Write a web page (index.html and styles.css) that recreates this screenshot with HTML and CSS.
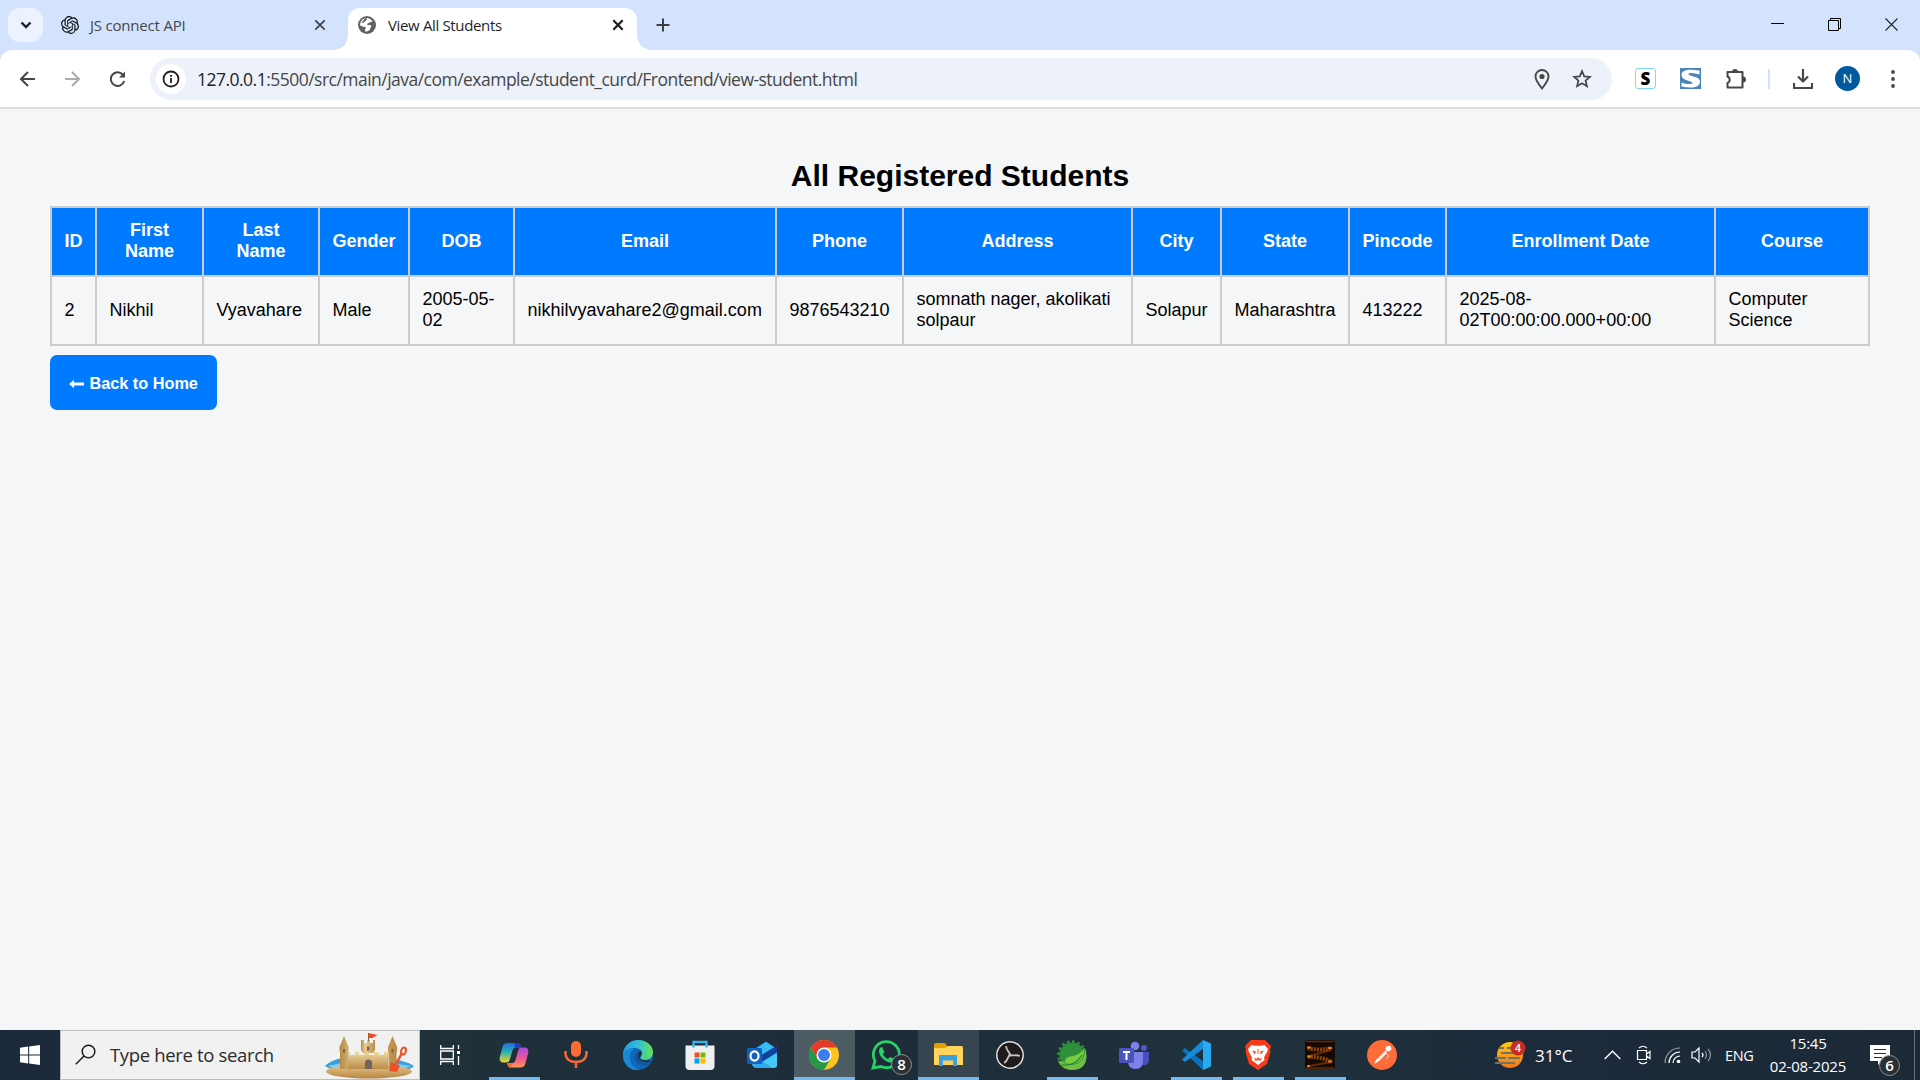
FILE: index.html
```html
<!DOCTYPE html>
<html lang="en">
<head>
<meta charset="utf-8">
<title>View All Students</title>
<link rel="stylesheet" href="styles.css">
</head>
<body>
<div class="screen">
  <header class="tabbar">
    <div class="tab-search"><svg width="35" height="34" viewBox="0 0 35 34"><path d="M13.5 14.5l4.5 4.5 4.5-4.5" fill="none" stroke="#1f1f1f" stroke-width="2.4"/></svg></div>
    <div class="tab">
      <svg class="favicon" width="18" height="18" viewBox="0 0 24 24"><path fill="#111" d="M22.28 9.82a5.98 5.98 0 0 0-.52-4.91 6.05 6.05 0 0 0-6.51-2.9A6.07 6.07 0 0 0 4.98 4.18a5.98 5.98 0 0 0-4 2.9 6.05 6.05 0 0 0 .74 7.1 5.98 5.98 0 0 0 .51 4.91 6.05 6.05 0 0 0 6.52 2.9A5.98 5.98 0 0 0 13.26 24a6.06 6.06 0 0 0 5.77-4.21 5.99 5.99 0 0 0 4-2.9 6.06 6.06 0 0 0-.75-7.07zm-9.02 12.61a4.48 4.48 0 0 1-2.88-1.04l.14-.08 4.78-2.76a.8.8 0 0 0 .39-.68v-6.74l2.02 1.17a.07.07 0 0 1 .04.05v5.58a4.5 4.5 0 0 1-4.49 4.5zM3.6 18.3a4.47 4.47 0 0 1-.53-3.01l.14.08 4.78 2.76a.77.77 0 0 0 .78 0l5.84-3.37v2.33a.08.08 0 0 1-.03.06L9.74 19.95a4.5 4.5 0 0 1-6.14-1.65zM2.34 7.9a4.49 4.49 0 0 1 2.37-1.98v5.69a.77.77 0 0 0 .39.67l5.81 3.36-2.02 1.17a.08.08 0 0 1-.07 0l-4.83-2.79A4.5 4.5 0 0 1 2.34 7.87zm16.6 3.85l-5.84-3.38L15.12 7.2a.08.08 0 0 1 .07 0l4.83 2.79a4.49 4.49 0 0 1-.68 8.1v-5.67a.79.79 0 0 0-.4-.67zm2.01-3.02l-.14-.09-4.77-2.78a.78.78 0 0 0-.79 0L9.41 9.23V6.9a.07.07 0 0 1 .03-.06l4.83-2.79a4.5 4.5 0 0 1 6.68 4.66zM8.31 12.86l-2.02-1.16a.08.08 0 0 1-.04-.06V6.07a4.5 4.5 0 0 1 7.38-3.45l-.14.08L8.7 5.46a.8.8 0 0 0-.39.68zm1.1-2.36l2.6-1.5 2.6 1.5v3l-2.6 1.5-2.6-1.5z"/></svg>
      <span class="tab-title title-a">JS connect API</span>
      <svg class="tab-close" width="12" height="12" viewBox="0 0 12 12"><path d="M1.3 1.3l9.4 9.4M10.7 1.3l-9.4 9.4" stroke="#45474a" stroke-width="1.9"/></svg>
    </div>
    <div class="tab tab-active">
      <svg class="favicon" width="18" height="18" viewBox="0 0 18 18"><circle cx="9" cy="9" r="9" fill="#5f6368"/><path fill="#fff" d="M7 2.2c3-.8 6 .5 7.6 3.3-1 .6-2.4.2-3.3 1.1-.7.8-1.7.7-2.1 1.6-.3.8 1.6.9 2.9.9 1.2.1 1.5 1.5.7 2.3-.9.8-.5 2.4-1.8 3.1-1.2.8-2.8 1.3-3.9.9.1-1.4-.4-2.2.5-3.2.8-.9-1-1.4-2.2-1.4C4 10.7 3.500 9.500 2.100 9.500 1.900 6.100 4 3.100 7 2.200z"/><path fill="#5f6368" d="M7 2.2l2 .4c.3 1.500-1 1.800-1.600 2.700-.5.9-1.900.4-2.100 1.800l-1.800-.3z"/></svg>
      <span class="tab-title title-b">View All Students</span>
      <svg class="tab-close" width="12" height="12" viewBox="0 0 12 12"><path d="M1.3 1.3l9.4 9.4M10.7 1.3l-9.4 9.4" stroke="#1f1f1f" stroke-width="2.2"/></svg>
    </div>
    <svg class="new-tab" width="14" height="14" viewBox="0 0 14 14"><path d="M7 .5v13M.5 7h13" stroke="#3c4043" stroke-width="2"/></svg>
    <div class="window-buttons">
      <svg width="14" height="14" viewBox="0 0 14 14"><path d="M0 5.5h13" stroke="#000"/></svg>
      <svg width="14" height="14" viewBox="0 0 14 14"><path d="M.5 2.5h10v10H.5zM2.5 2.5v-2h10v10h-2" fill="none" stroke="#000"/></svg>
      <svg width="14" height="14" viewBox="0 0 14 14"><path d="M.5 .5l12 12M12.5 .5l-12 12" stroke="#222" stroke-width="1.1"/></svg>
    </div>
  </header>
  <div class="toolbar-back"><nav class="toolbar">
    <div class="nav-buttons">
      <svg width="16" height="16" viewBox="0 0 16 16"><path d="M15 8H1.5M8 1L1 8l7 7" fill="none" stroke="#474747" stroke-width="2"/></svg>
      <svg width="16" height="16" viewBox="0 0 16 16"><path d="M0 8H13.5M7 1l7 7-7 7" fill="none" stroke="#ababab" stroke-width="2"/></svg>
      <svg width="16" height="16" viewBox="0 0 16 16"><path d="M14.2 10a6.8 6.8 0 1 1-1.5-6.5l1 1.5" fill="none" stroke="#474747" stroke-width="2"/><path d="M15 .5v6H9z" fill="#474747"/></svg>
    </div>
    <div class="omnibox">
      <span class="site-info"><svg width="18" height="18" viewBox="0 0 18 18"><circle cx="9" cy="9" r="7.5" fill="none" stroke="#1f1f1f" stroke-width="1.8"/><path d="M9 8v5M9 5v1.8" stroke="#1f1f1f" stroke-width="1.8"/></svg></span>
      <span class="url"><b>127.0.0.1</b>:5500/src/main/java/com/example/student_curd/Frontend/view-student.html</span>
      <svg class="pin" width="20" height="22" viewBox="0 0 20 22"><path d="M10 20.5C6 15.5 3.5 12 3.5 8.5a6.5 6.5 0 0 1 13 0c0 3.5-2.5 7-6.5 12z" fill="none" stroke="#474747" stroke-width="1.9"/><circle cx="10" cy="8.5" r="2.6" fill="#474747"/></svg>
      <svg class="star" width="20" height="20" viewBox="0 0 20 20"><path d="M10 2.2l2.2 5.2 5.7.5-4.3 3.7 1.3 5.6-4.9-3-4.9 3 1.3-5.6-4.3-3.7 5.7-.5z" fill="none" stroke="#474747" stroke-width="1.8"/></svg>
    </div>
    <div class="extensions">
      <span class="ext-s">S</span>
      <svg class="ext-blue" width="21" height="21" viewBox="0 0 21 21"><path fill="#4a86bd" d="M0 0h21v21H0z"/><path fill="#fff" d="M1.500 7C1.500 2 8 1 19.500 2.500v4C15 5 8.500 4 8.500 6c0 2.500 11.500 2 11.500 7.500 0 6.500-9 7-18.500 5v-4c4 1.500 11 2.500 11 .5 0-2.500-11-2-11-8z"/></svg>
      <svg class="puzzle" width="22" height="22" viewBox="0 0 22 22"><path d="M2.5 4h15v15.5h-15v-4.500a3.500 3.500 0 0 0 0-6.5z" fill="none" stroke="#474747" stroke-width="2" stroke-linejoin="round"/><path d="M7 4a3 3 0 0 1 6 0M18 8.5a3 3 0 0 1 0 6" fill="#474747"/></svg>
      <span class="separator"></span>
      <svg class="download" width="20" height="20" viewBox="0 0 20 20"><path d="M10 0v12M5 7.5l5 5 5-5M1 14v5h18v-5" fill="none" stroke="#474747" stroke-width="2.2" stroke-linejoin="round"/></svg>
      <span class="avatar">N</span>
      <svg width="4" height="18" viewBox="0 0 4 18"><g fill="#474747"><circle cx="2" cy="2" r="1.9"/><circle cx="2" cy="9" r="1.9"/><circle cx="2" cy="16" r="1.9"/></g></svg>
    </div>
  </nav></div>

  <main class="page">
    <h2 class="heading">All Registered Students</h2>
    <table class="students">
      <colgroup><col class="c-id"><col class="c-first"><col class="c-last"><col class="c-gender"><col class="c-dob"><col class="c-email"><col class="c-phone"><col class="c-address"><col class="c-city"><col class="c-state"><col class="c-pin"><col class="c-enroll"><col class="c-course"></colgroup>
      <thead><tr><th>ID</th><th>First Name</th><th>Last Name</th><th>Gender</th><th>DOB</th><th>Email</th><th>Phone</th><th>Address</th><th>City</th><th>State</th><th>Pincode</th><th>Enrollment Date</th><th>Course</th></tr></thead>
      <tbody><tr><td>2</td><td>Nikhil</td><td>Vyavahare</td><td>Male</td><td>2005-05-02</td><td>nikhilvyavahare2@gmail.com</td><td>9876543210</td><td>somnath nager, akolikati solpaur</td><td>Solapur</td><td>Maharashtra</td><td>413222</td><td>2025-08-02T00:00:00.000+00:00</td><td>Computer Science</td></tr></tbody>
    </table>
    <a class="back"><svg width="15" height="10" viewBox="0 0 15 10"><path d="M0 5L5 .8v2.7h10v3H5v2.700z" fill="#fff"/></svg><span>Back to Home</span></a>
  </main>

  <footer class="taskbar">
    <div class="start"><svg width="20" height="20" viewBox="0 0 20 20"><path fill="#fff" d="M0 2.8l8.200-1.200v7.900H0zM9.200 1.400L20 0v9.500H9.200zM0 10.500h8.200v7.900L0 17.200zM9.200 10.500H20V20L9.200 18.600z"/></svg></div>
    <div class="search">
      <svg class="magnifier" width="21" height="21" viewBox="0 0 21 21"><circle cx="13.5" cy="7.500" r="6.3" fill="none" stroke="#1c1c1c" stroke-width="1.5"/><path d="M9 12L.8 20.200" stroke="#1c1c1c" stroke-width="1.5"/></svg>
      <span class="search-text">Type here to search</span>
      <svg class="castle" width="90" height="47" viewBox="0 0 90 47">
        <defs>
          <linearGradient id="sand" x1="0" x2="1"><stop offset="0" stop-color="#b58a45"/><stop offset=".3" stop-color="#ecd197"/><stop offset="1" stop-color="#b98a42"/></linearGradient>
          <linearGradient id="wall" x1="0" y1="0" x2="0" y2="1"><stop offset="0" stop-color="#f0d9a4"/><stop offset="1" stop-color="#b98c48"/></linearGradient>
          <linearGradient id="ground" x1="0" y1="0" x2="0" y2="1"><stop offset="0" stop-color="#e6c98d"/><stop offset="1" stop-color="#b88543"/></linearGradient>
        </defs>
        <path fill="#3ba0dc" d="M1 34c4-4 12-8 20-8v12H8zM68 27c8 1 16 3 22 7-3 3-8 5-12 4l-12-3z"/><path fill="#86cdec" d="M4 34l14-3v5H8zM74 32l13 2-9 3z"/>
        <ellipse cx="45" cy="39.5" rx="43" ry="7" fill="url(#ground)"/>
        <path fill="url(#wall)" d="M22 20h4v3h5v-3h4v3h5v-3h5v3h5v-3h5v3h5v-3h4v17H22z"/>
        <path fill="url(#sand)" d="M37 8h3v3h3V8h3v3h3V8h2v10l-2 3H39l-2-3z"/><path fill="url(#sand)" d="M16 15h8v22h-8zM64.500 15h8v22h-8z"/><path fill="url(#sand)" d="M15.500 14h9v5l-1.500 2h-6l-1.500-2zM64 14h9v5l-1.500 2h-6L64 19z"/>
        <path fill="url(#sand)" d="M20 4l4.500 11h-9zM68.500 4L73 15h-9z"/><path fill="#6f655c" d="M41 37v-6a3.500 3.500 0 0 1 7 0v6zM43 14.500h2.500v4H43zM19 17h2v3.500h-2zM67.500 17h2v3.500h-2z"/>
        <path d="M44.500 9V1" stroke="#8b5b36"/><path fill="#f04b2e" d="M44.500 1l9 2-5 3h-4z"/>
        <path d="M78 21L71 34" stroke="#f0532f" stroke-width="2.5"/><path fill="#e9512d" d="M67 30l9 4-3 6-8-1z"/><ellipse cx="79.500" cy="19" rx="2.300" ry="3.500" fill="none" stroke="#f0532f" stroke-width="2" transform="rotate(20 79.500 19)"/>
      </svg>
    </div>
    <div class="task-view"><svg width="21" height="20" viewBox="0 0 21 20"><path d="M.7 0v3.500h12.600V0M.7 20v-3.500h12.600V20M.7 6h12.600v8H.7zM18.500 0v4M18.500 11v9" fill="none" stroke="#fff" stroke-width="1.3"/><path fill="#fff" d="M17 6h3v3h-3z"/></svg></div>
    <div class="apps">
      <div class="app running"><svg width="30" height="30" viewBox="0 0 30 30"><defs><linearGradient id="cpa" x1="0" y1="0" x2="0" y2="1"><stop offset="0" stop-color="#1b6fe0"/><stop offset=".45" stop-color="#27b0b8"/><stop offset="1" stop-color="#f7d026"/></linearGradient><linearGradient id="cpb" x1="0" y1="0" x2="0" y2="1"><stop offset="0" stop-color="#a94bdc"/><stop offset=".6" stop-color="#ef5c8c"/><stop offset="1" stop-color="#fb9b4f"/></linearGradient></defs><path d="M8.500 3H18c2.500 0 3 1 3.800 4.500H17c-2 0-3 1-3.700 3.500L11 19c-.8 2.500-1.500 3.500-4 3.500H4.500c-3 0-4.500-2-3.700-5.500l2.700-10C4.300 4 6 3 8.500 3z" fill="url(#cpa)"/><path d="M21.500 27.500H12c-2.500 0-3-1-3.800-4.500H13c2 0 3-1 3.700-3.500L19 11c.8-2.500 1.500-3.500 4-3.500h2.500c3 0 4.500 2 3.700 5.500l-2.700 10c-.8 3.500-2.500 4.500-5 4.500z" fill="url(#cpb)"/><path d="M15.500 3H18c2.500 0 3 1 3.800 4.500h-5c-1.500 0-1.300-2.500-1.300-4.500z" fill="#2439c8"/><path d="M12 27.500c-2.500 0-3-1-3.800-4.500H13z" fill="#f0712f"/></svg></div>
      <div class="app"><svg width="30" height="30" viewBox="0 0 30 30"><rect x="10" y="1" width="10" height="16" rx="5" fill="#fb6b32"/><path d="M4.500 11v2c0 6 4.500 9 10.500 9s10.500-3 10.500-9v-2M15 22v6" fill="none" stroke="#f56b38" stroke-width="2.5"/></svg></div>
      <div class="app"><svg width="30" height="30" viewBox="0 0 30 30"><defs><linearGradient id="eda" x1="0" x2="1"><stop offset="0" stop-color="#1e9de7"/><stop offset=".55" stop-color="#35c1cf"/><stop offset="1" stop-color="#69e34a"/></linearGradient></defs><circle cx="15" cy="15" r="15" fill="#1068bd"/><path d="M0 14C1 5 8 0 15 0c9 0 15 6 15 12 0 5-4 8-8 8-3 0-5-1-5-2s2-2 2-5c0-3-3-5-8-5C6 8 1 11 0 14z" fill="url(#eda)"/><path d="M0 13C2 9 7 8 11 9c-4 2-6 9-3 14 2 4 5 6 8 7C7 31-1 24 0 13z" fill="#1789d9"/><path d="M17 12c-5 4 1 14 11 11l-1 1c-8 4-17-2-15-9 .8-2 3-4 5-3z" fill="#14549c"/><path d="M18 11c2 3-1 6-1 7 1 2 5 2.500 9 2l2 1.500C22 24 15 21 15 15c0-2 1-4 3-4z" fill="#1e3140"/></svg></div>
      <div class="app"><svg width="30" height="30" viewBox="0 0 30 30"><path d="M8.500 7V2h13v5" fill="none" stroke="#34b3e9" stroke-width="2.3"/><path d="M.5 5.500h29V26q0 4-4 4h-21q-4 0-4-4z" fill="#eeeff0"/><path d="M9.500 12.500h5v5h-5z" fill="#f14f21"/><path d="M15.500 12.500h5v5h-5z" fill="#7eb900"/><path d="M9.500 18.500h5v5h-5z" fill="#00a3ee"/><path d="M15.500 18.500h5v5h-5z" fill="#feb800"/><path d="M8.500 5v2.500M21.500 5v2.500" stroke="#34b3e9" stroke-width="2.3"/></svg></div>
      <div class="app"><svg width="30" height="30" viewBox="0 0 30 30"><path d="M7 9L19 1.500 30 9v15L7 20z" fill="#1686df"/><path d="M10 8l9-6 8 5-13 8z" fill="#38bdf0"/><path d="M13 16L30 6v6L15 22z" fill="#153f9b"/><path d="M30 13v12q0 3-3 3H10q-4 0-5-4l10-2z" fill="#43cbf7"/><path d="M5 24l9-3 12 7H9z" fill="#2ea9ec"/><rect y="8" width="15" height="16" rx="1.5" fill="#0f62c4"/><ellipse cx="7.500" cy="16" rx="4" ry="4.700" fill="none" stroke="#fff" stroke-width="2.2"/></svg></div>
      <div class="app selected current"><svg width="30" height="30" viewBox="0 0 30 30"><circle cx="15" cy="15" r="15" fill="#fcc31e"/><path d="M2 7.500A15 15 0 0 1 28 7.500H15L8.500 19z" fill="#e33b2e"/><path d="M2 7.500A15 15 0 0 0 15 30l6.500-11.300L15 22.500l-6.500-3.800z" fill="#249a49"/><circle cx="15" cy="15" r="7.500" fill="#fff"/><circle cx="15" cy="15" r="6" fill="#3b7ded"/></svg></div>
      <div class="app"><svg width="30" height="30" viewBox="0 0 30 30"><path d="M2 28l2-7A13 13 0 1 1 10 26.500z" fill="none" stroke="#25d366" stroke-width="2.8"/><path d="M11 7l2.500 5-1.700 2c1 2.400 3 4 5.200 5l2-2 4.500 2c0 3-2.500 4-5 3.500C13 21 8 16 8 11c0-2 1.500-4 3-4z" fill="#25d366"/></svg><span class="badge">8</span></div>
      <div class="app open-window current"><svg width="30" height="30" viewBox="0 0 30 30"><path d="M1 5q0-2 2-2h9l2 3h14q2 0 2 2v17H1z" fill="#dfa000"/><path d="M1 8h11l3-2h13q2 0 2 2v17H1z" fill="#ffd45a"/><path d="M6 26V15h18v11h-4v-5.500h-10V26z" fill="#3e9fdd"/></svg></div>
      <div class="app"><svg width="30" height="30" viewBox="0 0 30 30"><circle cx="15" cy="15" r="13.2" fill="#1f1b1d" stroke="#dedede" stroke-width="1.5"/><g fill="none" stroke="#c4c4c4" stroke-width="1.8"><path d="M15 15c0-3-3.500-4-4-9"/><path d="M15 15c0-3-3.500-4-4-9" transform="rotate(120 15 15)"/><path d="M15 15c0-3-3.500-4-4-9" transform="rotate(240 15 15)"/></g><circle cx="15" cy="15" r="1.5" fill="#c4c4c4"/></svg></div>
      <div class="app running"><svg width="30" height="30" viewBox="0 0 30 30"><circle cx="15" cy="15" r="12.5" fill="#2f8e3c"/><circle cx="15" cy="15" r="13.3" fill="none" stroke="#2f8e3c" stroke-width="3" stroke-dasharray="2.6 2.6"/><path d="M28 8c3 10 2 22-13 22C8 30 3 26 1 21c12 2 20-4 27-13z" fill="#70bf40"/><path d="M27 8c2 12-6 18-17 16-5-1-2-7 3-8 6-1 10-2 14-8z" fill="#79cc43" stroke="#2c9037"/><path d="M5 25c9 1 16-3 20-10" fill="none" stroke="#29843a" stroke-width="1.3"/></svg></div>
      <div class="app"><svg width="30" height="30" viewBox="0 0 30 30"><circle cx="25" cy="8" r="3" fill="#5258c9"/><path d="M19 12h11v7q0 7-6 6z" fill="#4950bd"/><circle cx="16" cy="6" r="4.300" fill="#7b83eb"/><path d="M9 12h15v9q0 8-7.500 8T9 21z" fill="#7b83eb"/><rect y="8" width="15" height="15" rx="1.5" fill="#4b53bc"/><path d="M4 12h7M7.500 12v8" stroke="#fff" stroke-width="2"/></svg></div>
      <div class="app running"><svg width="30" height="30" viewBox="0 0 30 30"><path d="M1 10.500l3-2.500 19 14-1 8z" fill="#0872bd"/><path d="M22 0v9L4 22l-3-2.500z" fill="#168cd6"/><path d="M22 0l8 3.500v23L22 30z" fill="#29a9f2"/></svg></div>
      <div class="app running"><svg width="30" height="30" viewBox="0 0 30 30"><path d="M8 0h14l3 3 3 3-1 4 .5 2-3.500 12-9 6-9-6L2.500 12l.5-2-1-4 3-3z" fill="#f93b1c"/><path d="M8.500 5l3.500.7h6l3.500-.7L25 9l-1 3-3 5.500.5 2.500L15 25l-6.500-5 .5-2.500L6 12 5 9z" fill="#fff"/><path d="M9 10.500l4 1-1 3zM21 10.500l-4 1 1 3zM11 17.500l2.500 1.500L15 17l1.500 2 2.500-1.500-1.500 3.500L15 20l-2.500 1zM14.500 9h1v5h-1z" fill="#f44a24"/></svg></div>
      <div class="app running"><svg width="30" height="30" viewBox="0 0 30 30"><rect width="30" height="29" rx="2" fill="#160903"/><path d="M1 1.500h28M1 28h28" stroke="#632b0b" stroke-width="1.5"/><path d="M26 10L4 16M26 22L4 26" stroke="#63290a" stroke-width="2"/><path d="M3 8q11 3 24 0M3 17q11-1 24 5" fill="none" stroke="#8f420c" stroke-width="4" stroke-dasharray="2 1"/><path d="M2 7.500h4M23 8h4M2 16.500h4M23 21.500h4M2 26h3" stroke="#d97a24" stroke-width="2"/></svg></div>
      <div class="app"><svg width="30" height="30" viewBox="0 0 30 30"><circle cx="15" cy="15" r="15" fill="#ff6c37"/><circle cx="21.500" cy="8.500" r="2.800" fill="#fff"/><path d="M19 10L9 20l-2 4 5-3 8-8z" fill="#fff"/><path d="M18 12l-8 8M20 14l2 2-3 3" fill="none" stroke="#ffd6c6"/></svg></div>
    </div>
    <div class="tray">
      <svg class="weather" width="32" height="30" viewBox="0 0 32 30"><defs><linearGradient id="sun" x1="0" y1="0" x2="0" y2="1"><stop offset="0" stop-color="#fcca18"/><stop offset="1" stop-color="#f17618"/></linearGradient></defs><circle cx="16" cy="15" r="13" fill="url(#sun)"/><path d="M5 8h5M13 8h4M7 13h19M1 18h11M14 18h12M1 23h20M25 13h5" stroke="#776f64" stroke-width="2"/><circle cx="24" cy="8" r="7.500" fill="#c62e24"/><text x="24" y="12" text-anchor="middle" class="weather-count">4</text></svg>
      <span class="temp">31°C</span>
      <svg class="chevron" width="17" height="10" viewBox="0 0 17 10"><path d="M.7 9L8.500 1.200 16.300 9" fill="none" stroke="#fff" stroke-width="1.4"/></svg>
      <svg class="meet" width="16" height="20" viewBox="0 0 16 20"><path d="M1.500 5.500h9v9h-9zM10.500 9l3.500-2.500v7L10.500 11M3 3Q7-.5 11 3M3 17q4 3.500 8 0" fill="none" stroke="#fff" stroke-width="1.2"/></svg>
      <svg class="wifi" width="17" height="17" viewBox="0 0 17 17"><g fill="none" stroke="#fff" stroke-width="1.2"><path d="M1 16A15 15 0 0 1 16 1" opacity=".55"/><path d="M5 16A11 11 0 0 1 16 5M9 16a7 7 0 0 1 7-7"/></g><circle cx="14.500" cy="14.500" r="1.8" fill="#fff"/></svg>
      <svg class="sound" width="22" height="18" viewBox="0 0 22 18"><path d="M1 6h3l4-4v14l-4-4H1z" fill="none" stroke="#fff" stroke-width="1.2"/><path d="M11 7q2 2 0 4" fill="none" stroke="#fff" stroke-width="1.2"/><path d="M14 5q3 4 0 8M17 3q5 6 0 12" fill="none" stroke="#8b939b" stroke-width="1.2"/></svg>
      <span class="lang">ENG</span>
      <div class="clock"><span class="time">15:45</span><span class="date">02-08-2025</span></div>
      <div class="notice"><svg width="20" height="20" viewBox="0 0 20 20"><path fill="#fff" d="M0 0h20v16h-8l-4 4v-4H0z"/><path d="M4 4.500h12M4 8.500h12M4 12.500h8" stroke="#202b38" stroke-width="1.2"/></svg><span class="badge badge-notice">6</span></div>
      <div class="peek"></div>
    </div>
  </footer>
</div>
</body>
</html>
```
FILE: styles.css
```css
* { box-sizing: border-box; }
body { margin: 0; background: #f4f6f8; font-family: "Liberation Sans", Arial, sans-serif; overflow: hidden; }
svg { display: block; flex: none; }
.screen { display: flex; flex-direction: column; width: 1920px; height: 1080px; }

.tabbar { display: flex; height: 50px; background: #d3e3fd; align-items: flex-start; padding-left: 8px; font-family: "Open Sans", sans-serif; }
.tab-search { width: 35px; height: 34px; margin-top: 8px; border-radius: 12px; background: #ecf3fe; }
.tab { display: flex; align-items: center; width: 290px; height: 42px; margin-top: 8px; padding: 0 7px 8px 18px; }
.tab-active { position: relative; width: 289px; margin-left: 15px; padding: 0 13px 8px 10px; background: #fff; border-radius: 12px 12px 0 0; }
.tab-active::before, .tab-active::after { content: ""; position: absolute; bottom: 0; width: 14px; height: 14px; }
.tab-active::before { left: -14px; background: radial-gradient(circle at 0 0, transparent 13.5px, #fff 14px); }
.tab-active::after { right: -14px; background: radial-gradient(circle at 100% 0, transparent 13.5px, #fff 14px); }
.tab-title { flex: 1; font-size: 15px; line-height: 20px; white-space: nowrap; color: #1f1f1f; }
.title-a { margin-left: 11px; color: #474747; letter-spacing: -.2px; }
.title-b { margin-left: 12px; letter-spacing: -.35px; }
.new-tab { margin: 18px 0 0 19px; }
.window-buttons { display: flex; gap: 43px; margin: 18px 21px 0 auto; }

.toolbar-back { background: #d3e3fd; }
.toolbar { display: flex; align-items: center; height: 59px; background: #fff; border-radius: 12px 12px 0 0; border-bottom: 2px solid #dfdfdf; padding-left: 20px; }
.nav-buttons { display: flex; gap: 29px; width: 130px; }
.omnibox { display: flex; align-items: center; width: 1462px; height: 42px; border-radius: 21px; background: #ecf1fa; padding: 0 20px 0 6px; }
.site-info { display: grid; place-items: center; width: 30px; height: 30px; border-radius: 15px; background: #fff; }
.url { flex: 1; margin-left: 11px; font: 17.5px/24px "Open Sans", sans-serif; letter-spacing: -.52px; color: #474747; white-space: nowrap; padding-top: 1px; }
.url b { font-weight: 400; color: #1f1f1f; }
.star { margin-left: 20px; }
.extensions { display: flex; flex: 1; align-items: center; padding-left: 23px; }
.ext-s { display: grid; place-items: center; width: 21px; height: 21px; border: 1px solid #7fdaf0; border-radius: 3px; background: #fff; font: 800 17px/18px "Open Sans", sans-serif; color: #000; }
.ext-blue { margin-left: 24px; }
.puzzle { margin-left: 24px; }
.separator { width: 2px; height: 20px; margin-left: 21px; background: #d3e3fd; }
.download { margin-left: 23px; }
.avatar { display: grid; place-items: center; width: 25px; height: 25px; margin: 0 31px 0 22px; border-radius: 50%; background: #00599f; color: #fff; font: 13px/25px "Open Sans", sans-serif; }

.page { flex: 1; padding: 48px 50px 0; }
.heading { margin: 0; height: 49px; line-height: 37px; font-size: 30px; text-align: center; }
.students { width: 1820px; table-layout: fixed; border-collapse: collapse; font-size: 18px; line-height: 21px; }
.students th, .students td { height: 69px; padding: 0 12px 1px; border: 2px solid #ccc; }
.students td { text-align: left; color: #000; padding-left: 12.5px; padding-right: 10px; }
.students th { background: #007bff; color: #fff; }
.c-id { width: 45px; } .c-first { width: 107px; } .c-last { width: 116px; } .c-gender { width: 90px; } .c-dob { width: 105px; }
.c-email { width: 262px; } .c-phone { width: 127px; } .c-address { width: 229px; } .c-city { width: 89px; } .c-state { width: 128px; }
.c-pin { width: 97px; } .c-enroll { width: 269px; } .c-course { width: 154px; }
.back { display: flex; align-items: center; width: 167px; height: 55px; margin-top: 9px; padding: 2px 0 0 19px; gap: 5.5px; border-radius: 7px; background: #007bff; color: #fff; font-size: 16.25px; font-weight: 700; white-space: nowrap; }

.taskbar { display: flex; height: 50px; background: linear-gradient(90deg, #1b293a, #20313a 20%, #1e2c39 45%, #20323c 65%, #1c2a3b 80%, #1d2937); color: #fff; font-family: "Open Sans", sans-serif; }
.start { display: grid; place-items: center; width: 60px; }
.search { display: flex; align-items: center; width: 360px; border: 1px solid #bdbdbd; background: #f1f1f1; padding-left: 14px; }
.search-text { width: 214px; margin-left: 14px; color: #2b2b2b; font-size: 18.5px; letter-spacing: -.34px; white-space: nowrap; padding-bottom: 1px; }
.magnifier { margin-bottom: 1px; }
.task-view { display: grid; place-items: center; width: 63px; padding-right: 3px; }
.apps { display: flex; }
.app { position: relative; display: grid; place-items: center; width: 62px; height: 50px; padding-right: 1px; }
.running::after, .current::after { content: ""; position: absolute; left: 6px; bottom: 0; width: 51px; height: 3px; background: #76b9ed; }
.current::after { left: 1px; width: 61px; }
.selected, .open-window { padding: 0 0 0 1px; background-clip: content-box; }
.selected { background-color: #4d5b62; }
.open-window { background-color: #364550; }
.selected svg, .open-window svg { margin-right: 2px; }
.badge { position: absolute; left: 36px; top: 24px; width: 21px; height: 21px; border: 1px solid #8e9297; border-radius: 50%; background: #2b3036; color: #fff; font: 600 15px/18px "Open Sans", sans-serif; text-align: center; }
.tray { display: flex; flex: 1; align-items: center; padding-left: 81px; }
.weather-count { fill: #fff; font: 600 11px "Open Sans", sans-serif; }
.temp { width: 39px; margin-left: 9px; font-size: 17px; white-space: nowrap; }
.chevron { margin-left: 30px; }
.meet { margin-left: 15px; }
.wifi { margin-left: 12px; }
.sound { margin-left: 10px; }
.lang { width: 30px; margin-left: 12px; font-size: 14.5px; letter-spacing: -.4px; }
.clock { display: flex; flex-direction: column; align-items: center; width: 84px; margin-left: 11px; font-size: 15px; line-height: 23px; letter-spacing: -.2px; white-space: nowrap; }
.notice { position: relative; margin-left: 20px; }
.badge-notice { left: 9px; top: 10px; }
.peek { width: 1px; height: 50px; margin: 0 5px 0 auto; background: #69727c; }
```
